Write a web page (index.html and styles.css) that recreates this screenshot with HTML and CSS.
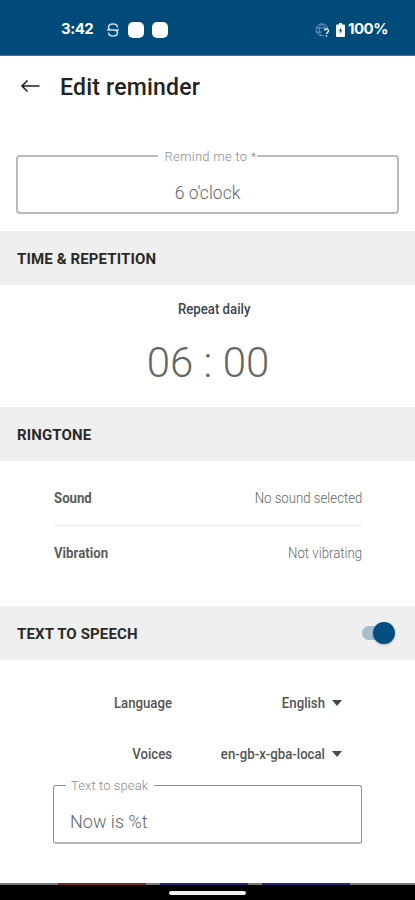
FILE: index.html
```html
<!DOCTYPE html>
<html lang="en">
<head>
<meta charset="utf-8">
<title>Edit reminder</title>
<link rel="stylesheet" href="styles.css">
</head>
<body>
<div class="screen">
  <div class="status">
    <span class="clock">3:42</span>
    <svg class="s-icon" width="12" height="14" viewBox="0 0 12 14" fill="none" stroke="#c4d9e9" stroke-width="1.5"><path d="M10.500 4.500C10.500 2.300 8.500 1 6 1S1.500 2.300 1.500 4.200 3 7 6 7 10.500 7.800 10.500 9.800 8.500 13 6 13 1.500 11.700 1.500 9.500M0 7h12"/></svg>
    <i class="blob"></i><i class="blob"></i>
    <svg class="globe" width="15" height="14" viewBox="0 0 15 14" fill="none" stroke="#6f97b8" stroke-width="1"><path d="M9 12.500A6 6 0 1 1 12.700 5M1 5h11.500M1 9h6M6.500 1C3.500 4 3.500 10 6.500 13M7 1c1.700 1.500 2.300 3 2.500 4"/><path d="M9.400 7.700c.3-2.300 4.300-2 4.100.2-.1 1.400-2 1.500-2 3.100M11.500 12.300v1.500" stroke="#d5e5f2" stroke-width="1.500"/></svg>
    <svg class="battery" width="9" height="14" viewBox="0 0 9 14"><path fill="#fff" d="M3 0h3v1.500h2a1 1 0 0 1 1 1V13a1 1 0 0 1-1 1H1a1 1 0 0 1-1-1V2.500a1 1 0 0 1 1-1h2z"/><path fill="#004b7a" d="M5 4.500 3 8.300h1.300V11L6.100 7.200H5z"/></svg>
    <span class="percent">100%</span>
  </div>
  <header class="appbar">
    <svg width="20" height="14" viewBox="0 0 20 14" fill="none" stroke="#222" stroke-width="1.600"><path d="M19.500 7H2M7.500 1.500 2 7 7.500 12.500"/></svg>
    <h1>Edit reminder</h1>
  </header>
  <fieldset class="field name">
    <legend>Remind me to *</legend>
    <span>6 o'clock</span>
  </fieldset>
  <h2 class="section">TIME &amp; REPETITION</h2>
  <div class="time">
    <span class="repeat narrow">Repeat daily</span>
    <span class="digits">06 : 00</span>
  </div>
  <h2 class="section">RINGTONE</h2>
  <div class="rows">
    <div class="row"><b class="narrow">Sound</b><span class="narrow value">No sound selected</span></div>
    <div class="row"><b class="narrow">Vibration</b><span class="narrow value">Not vibrating</span></div>
  </div>
  <h2 class="section">TEXT TO SPEECH<span class="switch"><i></i></span></h2>
  <div class="options">
    <div class="option"><span class="narrow key">Language</span><span class="narrow pick">English</span><i class="caret"></i></div>
    <div class="option"><span class="narrow key">Voices</span><span class="narrow pick">en-gb-x-gba-local</span><i class="caret"></i></div>
  </div>
  <fieldset class="field speak">
    <legend>Text to speak</legend>
    <span>Now is %t</span>
  </fieldset>
  <div class="peek"><i class="red"></i><i></i><i></i></div>
  <div class="nav"><i></i></div>
</div>
</body>
</html>
```
FILE: styles.css
```css
* { box-sizing: border-box; }
body { margin: 0; font-family: Roboto, sans-serif; background: #fff; color: #222; }
.screen { width: 415px; height: 900px; overflow: hidden; display: flex; flex-direction: column; }
.screen > * { flex: none; }
.status { height: 56px; background: #004b7a; border-bottom: 1px solid #4a709f; display: flex; align-items: center; padding: 4px 27px 0 61px; color: #fff; font: 700 15px/20px Inter, sans-serif; }
.clock, .percent { letter-spacing: -.5px; white-space: nowrap; position: relative; top: -.5px; }
.clock { width: 46px; }
.s-icon { margin-right: 9px; }
.blob { width: 16px; height: 16px; border-radius: 5px; background: #fff; margin-right: 8px; }
.globe { margin-left: auto; margin-right: 6px; }
.battery { margin-right: 3px; }
.percent { width: 40px; }
.appbar { height: 62px; display: flex; align-items: center; padding: 0 0 0 20px; }
.appbar svg { margin-bottom: 2px; }
.appbar h1 { margin: 1px 0 0 20px; font-size: 23px; line-height: 28px; font-weight: 500; letter-spacing: .22px; }
.field { min-width: 0; margin: 0; padding: 0; border: 2px solid #b9bbba; border-radius: 4px; color: #666; font-size: 18px; font-weight: 300; }
.field legend { font-size: 13px; line-height: 14px; padding-top: 2px; color: #8c8c8c; letter-spacing: .25px; white-space: nowrap; }
.field span { display: block; line-height: 24px; }
.name { margin: 30px 16px 17px; height: 66px; text-align: center; }
.name legend { margin: 0 auto; padding: 2px 1px 0 7px; }
.name span { padding-top: 17px; font-size: 17.500px; }
.section { height: 54px; margin: 0; background: #efefef; display: flex; align-items: center; justify-content: space-between; padding: 1px 19px 0 17px; font-size: 15px; font-weight: 700; letter-spacing: .13px; color: #2a2a2a; }
.narrow { display: inline-block; transform: scaleX(.88); transform-origin: left; white-space: nowrap; }
.time { height: 122px; display: flex; flex-direction: column; align-items: center; }
.repeat { margin: 14px 0 0 14px; font-size: 15px; line-height: 20px; font-weight: 500; color: #37474f; transform-origin: center; }
.digits { margin-top: 19px; padding-left: 1px; font-size: 42px; line-height: 50px; font-weight: 300; color: #666; }
.rows { height: 145px; padding: 9px 53px 0 54px; }
.row { height: 55px; display: flex; align-items: center; justify-content: space-between; font-size: 15px; color: #5c5c5c; }
.row + .row { border-top: 1px solid #ededed; }
.value { transform-origin: right; font-weight: 300; color: #666; }
.switch { width: 34px; height: 22px; display: flex; align-items: center; position: relative; top: -1px; justify-content: flex-end; }
.switch::before { content: ""; width: 25px; height: 14px; border-radius: 7px; background: #a5bfd0; margin-right: -12px; }
.switch i { width: 22px; height: 22px; border-radius: 50%; background: #004f80; box-shadow: 0 1px 2px #0004; position: relative; left: -1px; }
.options { height: 117px; padding-top: 18px; }
.option { height: 51px; display: flex; align-items: center; font-size: 15px; font-weight: 500; color: #555; }
.key, .pick { transform-origin: right; text-align: right; position: relative; top: -1px; }
.key { width: 172px; }
.pick { width: 153px; }
.caret { margin-left: 7px; border: solid transparent; border-width: 6px 5px 0; border-top-color: #3f4c52; position: relative; top: -1px; }
.speak { margin: 0 53px; height: 67px; border: 1px solid #8f8f8f; border-bottom: 2px solid #b5b5b5; border-radius: 3px; }
.speak legend { margin-left: 12px; padding: 2px 6px 0 5px; letter-spacing: .1px; }
.speak span { padding: 17px 0 0 16px; }
.peek { height: 2px; margin-top: 39px; background: #777; padding-left: 58px; display: flex; gap: 14px; }
.peek i { width: 88px; background: #252a72; }
.peek .red { background: #7b2922; }
.nav { height: 16px; background: #000; display: flex; justify-content: center; padding-top: 6px; }
.nav i { width: 77px; height: 4px; border-radius: 2px; background: #eee; }
```
